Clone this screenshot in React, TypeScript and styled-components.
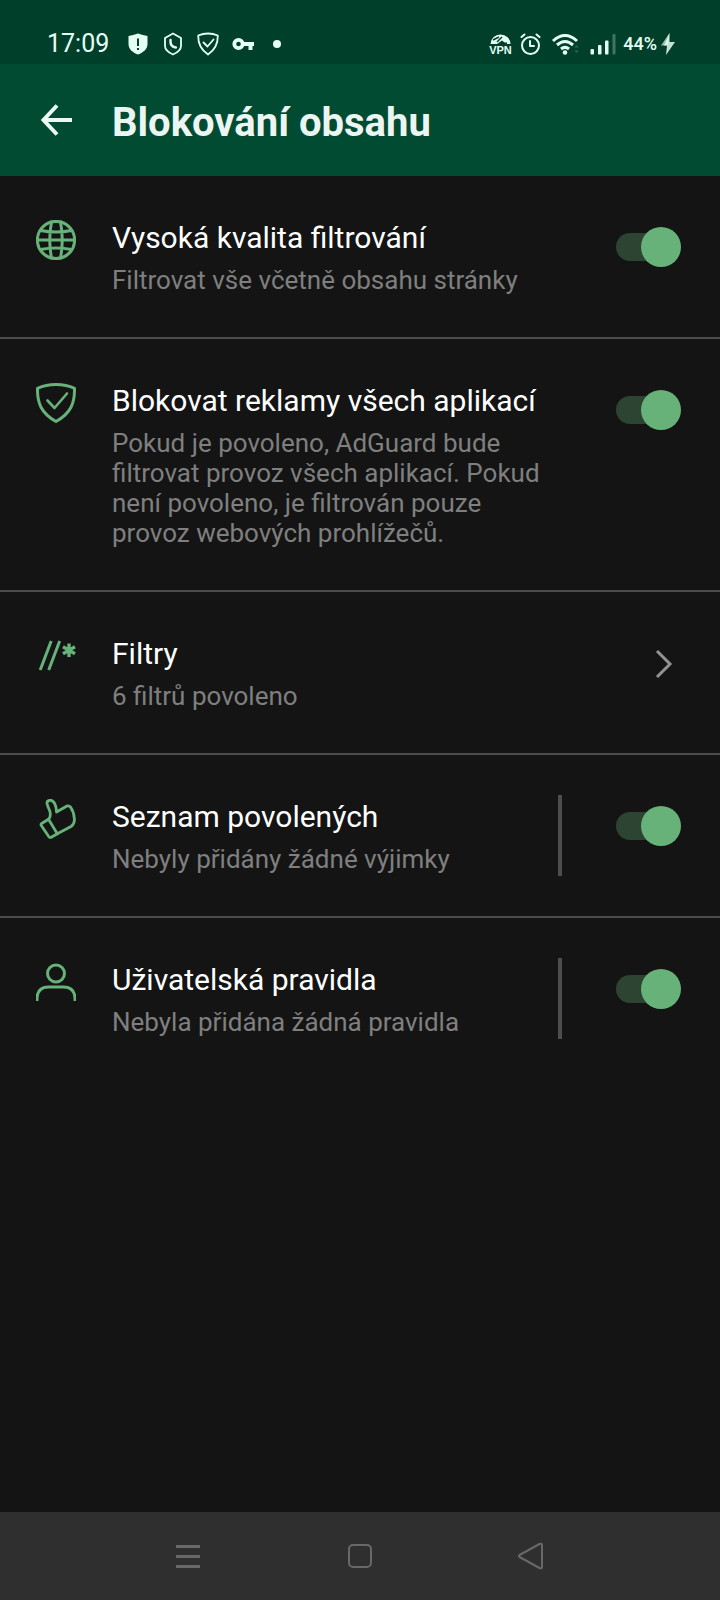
import React from "react";
import styled, { createGlobalStyle } from "styled-components";

const GlobalStyle = createGlobalStyle`
  *, *::before, *::after { box-sizing: border-box; }
  body { margin: 0; background: #141414; font-family: Roboto, "Noto Sans", sans-serif; }
`;

const Screen = styled.div`
  min-height: 100vh;
  display: flex;
  flex-direction: column;
  background: #141414;
  color: #fff;
`;

const StatusBar = styled.div`
  height: 64px;
  padding: 24px 45px 0 47px;
  display: flex;
  justify-content: space-between;
  background: #003f2a;
  color: #e6fff5;
`;

const StatusGroup = styled.div<{ $gap: number }>`
  height: 40px;
  display: flex;
  align-items: center;
  gap: ${(p) => p.$gap}px;
  svg { display: block; flex: none; overflow: visible; }
`;

const Clock = styled.time`
  width: 67px;
  font-size: 25px;
  line-height: 42px;
`;

const Battery = styled.span`
  display: flex;
  align-items: center;
  gap: 4px;
  font-size: 18px;
  line-height: 40px;
  font-weight: 500;
`;

const AppBar = styled.header`
  height: 112px;
  display: grid;
  grid-template-columns: 112px 1fr;
  align-items: center;
  background: #004b32;
`;

const BackButton = styled.button`
  width: 112px;
  height: 80px;
  padding: 0;
  display: grid;
  place-items: center;
  border: 0;
  background: none;
  color: #ecf8f2;
  cursor: pointer;
`;

const Title = styled.h1`
  margin: 0;
  padding-top: 6px;
  font-size: 40px;
  line-height: 48px;
  font-weight: 700;
  color: #ecf5f1;
`;

const List = styled.main`
  flex: 1;
`;

const Row = styled.section`
  padding: 40px 0;
  display: grid;
  grid-template-columns: 112px 1fr 162px;
  border-bottom: 2px solid #4b4b4b;
  color: inherit;
  text-decoration: none;
  &:last-child { border-bottom: 0; }
`;

const IconCell = styled.span`
  padding: 4px 0 0 36px;
  color: #67b279;
  svg { display: block; }
`;

const Texts = styled.span`
  padding: 4px 0 2px;
  display: flex;
  flex-direction: column;
  gap: 9px;
`;

const RowTitle = styled.label`
  font-size: 30px;
  line-height: 36px;
`;

const RowNote = styled.span`
  font-size: 26px;
  line-height: 30px;
  color: #7f7f7f;
`;

const Trailing = styled.span<{ $divided?: boolean }>`
  padding: 11px 39px 0 0;
  display: flex;
  justify-content: flex-end;
  align-items: flex-start;
  border-left: 4px solid ${(p) => (p.$divided ? "#4d4d4d" : "transparent")};
`;

const Switch = styled.input`
  appearance: none;
  width: 65px;
  height: 40px;
  margin: 0;
  display: flex;
  align-items: center;
  cursor: pointer;
  &::before {
    content: "";
    flex: 1;
    height: 28px;
    margin-right: -20px;
    border-radius: 14px 0 0 14px;
    background: #2d4433;
  }
  &::after {
    content: "";
    width: 40px;
    height: 40px;
    border-radius: 50%;
    background: #67b279;
  }
  &:not(:checked) { transform: scaleX(-1); filter: grayscale(1); }
`;

const NavBar = styled.nav`
  height: 88px;
  display: flex;
  justify-content: center;
  align-items: center;
  gap: 84px;
  background: #2f2f2f;
`;

const NavButton = styled.button`
  width: 88px;
  height: 88px;
  padding: 0;
  display: grid;
  place-items: center;
  border: 0;
  background: none;
  color: #686868;
  cursor: pointer;
`;

const line = {
  fill: "none",
  stroke: "currentColor",
  strokeWidth: 3,
  strokeLinecap: "round" as const,
  strokeLinejoin: "round" as const,
};

const Globe = () => (
  <svg width="40" height="40" viewBox="0 0 40 40" {...line}>
    <circle cx="20" cy="20" r="18.6" />
    <path d="M1.5 20h37M4.500 10.500Q20 13.500 35.500 10.500M4.500 29.500Q20 26.500 35.500 29.500M15.500 2Q12 20 15.500 38M24.500 2Q28 20 24.500 38" />
  </svg>
);

const Shield = () => (
  <svg width="40" height="40" viewBox="0 0 40 40" {...line}>
    <path d="M20 1.500C13 1.500 6.500 3 1.500 5.300C1.200 20 5 30 20 38.500C35 30 38.800 20 38.500 5.300C33.500 3 27 1.500 20 1.500Z" />
    <path d="M11.500 17.500L18.500 25L31 10.500" strokeWidth="2.600" />
  </svg>
);

const Rules = () => (
  <svg width="40" height="40" viewBox="0 0 40 40" {...line} strokeLinecap="butt">
    <path d="M15.200 5L4.200 34M23.700 5L12.700 34" />
    <path d="M33 7.500V21M27 10.800L39 17.700M39 10.800L27 17.700" strokeWidth="3.400" />
  </svg>
);

const Thumb = () => (
  <svg width="40" height="40" viewBox="0 0 40 40" {...line} strokeWidth={2.8}>
    <path d="M5.700 24.500L12.500 20.300L21.300 34.700L15.300 38.300Q13.800 39 12.700 37.500L5.300 26.500Q4.600 25.200 5.700 24.500Z" />
    <path d="M12.500 20.300Q15.500 17 13.600 11.500Q11.500 7 11 4.500Q10.800 1.600 14 1.300C18.500 1 20.500 8 20.500 13L31 7Q33 6.300 34.500 8Q38 13 38.300 19.500Q39 25 35 27.500L21.300 34.700" />
  </svg>
);

const Person = () => (
  <svg width="40" height="40" viewBox="0 0 40 40" {...line} strokeLinecap="butt">
    <circle cx="20" cy="11.500" r="8.500" />
    <path d="M1 39V36Q1.500 25 12.500 25H27.500Q38.500 25 39 36V39" />
  </svg>
);

type Item = {
  id: string;
  title: string;
  note: string;
  icon: React.ReactNode;
  divided?: boolean;
  link?: boolean;
};

const items: Item[] = [
  { id: "quality", title: "Vysoká kvalita filtrování", note: "Filtrovat vše včetně obsahu stránky", icon: <Globe /> },
  {
    id: "apps",
    title: "Blokovat reklamy všech aplikací",
    note: "Pokud je povoleno, AdGuard bude filtrovat provoz všech aplikací. Pokud není povoleno, je filtrován pouze provoz webových prohlížečů.",
    icon: <Shield />,
  },
  { id: "filters", title: "Filtry", note: "6 filtrů povoleno", icon: <Rules />, link: true },
  { id: "allowlist", title: "Seznam povolených", note: "Nebyly přidány žádné výjimky", icon: <Thumb />, divided: true },
  { id: "rules", title: "Uživatelská pravidla", note: "Nebyla přidána žádná pravidla", icon: <Person />, divided: true },
];

const SettingRow = ({ item }: { item: Item }) =>
  item.link ? (
    <Row as="a" href="#filters">
      <IconCell>{item.icon}</IconCell>
      <Texts>
        <RowTitle as="span">{item.title}</RowTitle>
        <RowNote>{item.note}</RowNote>
      </Texts>
      <Trailing>
        <svg width="34" height="40" viewBox="0 0 34 40" {...line} stroke="#929292" strokeLinecap="butt" strokeLinejoin="miter">
          <path d="M10 8L23 21L10 34" />
        </svg>
      </Trailing>
    </Row>
  ) : (
    <Row>
      <IconCell>{item.icon}</IconCell>
      <Texts>
        <RowTitle htmlFor={item.id}>{item.title}</RowTitle>
        <RowNote id={`${item.id}-note`}>{item.note}</RowNote>
      </Texts>
      <Trailing $divided={item.divided}>
        <Switch type="checkbox" id={item.id} aria-describedby={`${item.id}-note`} defaultChecked />
      </Trailing>
    </Row>
  );

const StatusIcons = () => (
  <>
    <svg width="22" height="24" viewBox="0 0 22 24">
      <path d="M11 1.500Q16 3 20.500 4V12C20.500 17 16.500 20.500 11 22.500C5.500 20.500 1.500 17 1.500 12V4Q6 3 11 1.500Z" fill="currentColor" />
      <path d="M11 6.500V14M11 16V18" stroke="#003f2a" strokeWidth="2" />
    </svg>
    <svg width="22" height="24" viewBox="0 0 22 24" {...line} strokeWidth={1.8}>
      <path d="M11 1.500L19 6V14C19 18 15.500 20.500 11 22.500C6.500 20.500 3 18 3 14V6Z" />
      <path d="M8.500 8Q8 15 14 15.500" strokeWidth="2.400" />
    </svg>
    <svg width="22" height="24" viewBox="0 0 22 24" {...line} strokeWidth={1.8}>
      <path d="M11 1.500C7 1.500 4 2.300 1.200 3.500C1 12 3.500 17.500 11 22.500C18.500 17.500 21 12 20.800 3.500C18 2.300 15 1.500 11 1.500Z" />
      <path d="M6.500 10.500L10.500 14.500L16.500 7.500" />
    </svg>
    <svg width="22" height="24" viewBox="0 0 22 24" fill="none" stroke="currentColor">
      <circle cx="6.500" cy="12" r="4.200" strokeWidth="3.800" />
      <path d="M11 12H22M18.500 12V18" strokeWidth="4" />
    </svg>
    <svg width="22" height="24" viewBox="0 0 22 24">
      <circle cx="10" cy="12" r="4" fill="currentColor" />
    </svg>
  </>
);

const SignalIcons = () => (
  <>
    <svg width="22" height="24" viewBox="0 0 22 24">
      <path d="M1.500 12A10 9.500 0 0 1 21.500 12H17.500L13 8.500L8 12Z" fill="currentColor" />
      <path d="M4 8L10 5M8 10L13 5M13 12L18 11" stroke="#003f2a" strokeWidth="1.500" />
      <text x="11.500" y="22" textAnchor="middle" fontFamily="Liberation Sans, sans-serif" fontSize="11" fontWeight="700" fill="currentColor">VPN</text>
    </svg>
    <svg width="22" height="24" viewBox="0 0 22 24" {...line} strokeWidth={2}>
      <circle cx="11.500" cy="13.500" r="8.500" />
      <path d="M11 9V14H15M2.500 5L5.500 2.500M20.500 5L17.500 2.500" />
    </svg>
    <svg width="30" height="24" viewBox="0 0 30 24" {...line} strokeLinecap="butt">
      <path d="M4 9Q16 -2 28 9M8 13Q16 6 24 13M12 17Q16 13.700 20 17" />
      <circle cx="16" cy="20.500" r="2.300" fill="currentColor" stroke="none" />
      <path d="M25 15.500L27.500 13L30 15.500ZM25 18.500L27.500 21L30 18.500Z" fill="#286652" stroke="none" />
    </svg>
    <svg width="28" height="24" viewBox="0 0 28 24" fill="currentColor">
      <rect x="3.500" y="17" width="3.500" height="5.500" rx="1" />
      <rect x="11" y="13" width="3.500" height="9.500" rx="1" />
      <rect x="18" y="8.500" width="3.500" height="14" rx="1" />
      <rect x="25.500" y="2" width="3" height="20.500" rx="1" opacity=".28" />
    </svg>
  </>
);

export default function App() {
  return (
    <Screen>
      <GlobalStyle />
      <StatusBar>
        <StatusGroup $gap={13}>
          <Clock>17:09</Clock>
          <StatusIcons />
        </StatusGroup>
        <StatusGroup $gap={8}>
          <SignalIcons />
          <Battery>
            44%
            <svg width="14" height="24" viewBox="0 0 14 24" fill="currentColor">
              <path d="M8.500 1L0 13.500H6L7.500 10Z" opacity=".65" />
              <path d="M8.500 1V10H14L5 23L6 13.500H3Z" opacity=".85" />
            </svg>
          </Battery>
        </StatusGroup>
      </StatusBar>
      <AppBar>
        <BackButton type="button" aria-label="Zpět">
          <svg width="36" height="36" viewBox="0 0 36 36" {...line} strokeWidth={4} strokeLinecap="butt" strokeLinejoin="miter">
            <path d="M19 3.500L5.500 18L19 32.500M5.500 18H34" />
          </svg>
        </BackButton>
        <Title>Blokování obsahu</Title>
      </AppBar>
      <List>
        {items.map((item) => (
          <SettingRow key={item.id} item={item} />
        ))}
      </List>
      <NavBar>
        <NavButton type="button" aria-label="Nabídka">
          <svg width="28" height="28" viewBox="0 0 28 28" {...line} strokeWidth={3} strokeLinecap="butt">
            <path d="M2 4.500H26M2 14.500H26M2 24.500H26" />
          </svg>
        </NavButton>
        <NavButton type="button" aria-label="Domů">
          <svg width="28" height="28" viewBox="0 0 28 28" {...line} strokeWidth={2}>
            <rect x="3" y="3" width="22" height="22" rx="4" />
          </svg>
        </NavButton>
        <NavButton type="button" aria-label="Zpět">
          <svg width="28" height="28" viewBox="0 0 28 28" {...line} strokeWidth={2}>
            <path d="M1.500 13Q.5 14 1.500 15L21.500 26Q24 27 24 25V3Q24 1 21.500 2Z" />
          </svg>
        </NavButton>
      </NavBar>
    </Screen>
  );
}
